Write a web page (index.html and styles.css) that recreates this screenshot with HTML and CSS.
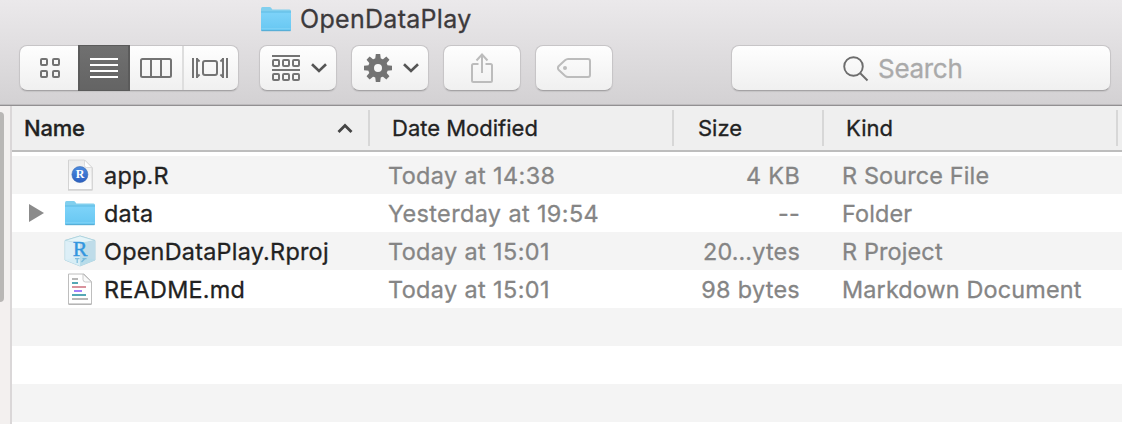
FILE: index.html
```html
<!DOCTYPE html>
<html lang="en">
<head>
<meta charset="utf-8">
<title>OpenDataPlay</title>
<link rel="stylesheet" href="styles.css">
</head>
<body>
<svg class="defs" width="0" height="0" aria-hidden="true">
  <defs>
    <linearGradient id="folder-front" x1="0" y1="0" x2="0" y2="1"><stop offset="0" stop-color="#7ed3f9"/><stop offset="1" stop-color="#67c7f2"/></linearGradient>
    <linearGradient id="paper" x1="0" y1="0" x2="0" y2="1"><stop offset="0" stop-color="#ececec"/><stop offset="1" stop-color="#fdfdfd"/></linearGradient>
    <linearGradient id="badge" x1="0" y1="0" x2="0" y2="1"><stop offset="0" stop-color="#4b8be0"/><stop offset="1" stop-color="#2c5fc0"/></linearGradient>
    <symbol id="folder" viewBox="0 0 32 26">
      <path d="M1 3Q1 1 2.5 1H9.5Q10.7 1 11.3 2L12.3 3.4H29.5Q31 3.4 31 5V23.5Q31 25 29.5 25H2.5Q1 25 1 23.5Z" fill="#81cfee"/>
      <path d="M1 6.2H31V23.5Q31 25 29.5 25H2.5Q1 25 1 23.5Z" fill="url(#folder-front)"/>
      <path d="M1 6H31" stroke="#5dbbe6"/>
      <path d="M1.3 22.6H30.7" stroke="#82d2f5" stroke-width=".8"/>
      <path d="M1.5 24.7H30.5" stroke="#55a9d0"/>
    </symbol>
  </defs>
</svg>
<header class="toolbar">
  <div class="title"><svg width="32" height="26"><use href="#folder"/></svg><h1>OpenDataPlay</h1></div>
  <div class="controls">
    <div class="button views">
      <span class="view view-icons"><svg width="22" height="22" viewBox="0 0 22 22" fill="none" stroke="#737373" stroke-width="2"><rect x="2" y="2" width="6" height="6" rx="1"/><rect x="14" y="2" width="6" height="6" rx="1"/><rect x="2" y="14" width="6" height="6" rx="1"/><rect x="14" y="14" width="6" height="6" rx="1"/></svg></span>
      <span class="view view-list"><svg width="28" height="22" viewBox="0 0 28 22" stroke="#fff" stroke-width="2"><path d="M0 2H28M0 8H28M0 14H28M0 20H28"/></svg></span>
      <span class="view view-columns"><svg width="32" height="22" viewBox="0 0 32 22" fill="none" stroke="#737373" stroke-width="2"><rect x="1" y="2" width="30" height="18" rx="1.5"/><path d="M11 2V20M21 2V20"/></svg></span>
      <span class="view view-flow"><svg width="38" height="22" viewBox="0 0 38 22" fill="none" stroke="#737373" stroke-width="2"><rect x="12" y="4" width="14" height="14" rx="2"/><path d="M2 1V21M36 1V21M6 1V21M32 1V21"/><path d="M6 2L8.6 4.5M6 20L8.6 17.5M32 2L29.4 4.5M32 20L29.4 17.5" stroke-width="1.8"/></svg></span>
    </div>
    <div class="button arrange">
      <svg width="28" height="28" viewBox="0 0 28 28" fill="none" stroke="#737373" stroke-width="2"><path d="M0 2H28M0 16H28"/><rect x="1" y="6" width="6" height="6" rx="1"/><rect x="11" y="6" width="6" height="6" rx="1"/><rect x="21" y="6" width="6" height="6" rx="1"/><rect x="1" y="20" width="6" height="6" rx="1"/><rect x="11" y="20" width="6" height="6" rx="1"/><rect x="21" y="20" width="6" height="6" rx="1"/></svg>
      <svg width="16" height="10" viewBox="0 0 16 10" fill="none" stroke="#555" stroke-width="2.6"><path d="M1 1.3L8 8L15 1.3"/></svg>
    </div>
    <div class="button arrange">
      <svg width="28" height="28" viewBox="-14 -14 28 28" fill="#737373"><circle r="7" fill="none" stroke="#737373" stroke-width="6"/><g id="teeth"><path id="tooth" d="M-2.8-9L-2.2-14H2.2L2.8-9Z"/><use href="#tooth" transform="rotate(90)"/><use href="#tooth" transform="rotate(180)"/><use href="#tooth" transform="rotate(270)"/></g><use href="#teeth" transform="rotate(45)"/></svg>
      <svg width="16" height="10" viewBox="0 0 16 10" fill="none" stroke="#555" stroke-width="2.6"><path d="M1 1.3L8 8L15 1.3"/></svg>
    </div>
    <div class="button"><svg width="22" height="30" viewBox="0 0 22 30" fill="none" stroke="#bcbcbc" stroke-width="2"><path d="M7.5 11H2.5Q1 11 1 12.500V27.500Q1 29 2.500 29H19.500Q21 29 21 27.500V12.500Q21 11 19.500 11H14.500M11 20V1.500M5.500 7.500L11 1.500L16.500 7.500"/></svg></div>
    <div class="button"><svg width="34" height="20" viewBox="0 0 34 20" fill="none" stroke="#bcbcbc" stroke-width="2"><path d="M11 1H31Q33 1 33 3V17Q33 19 31 19H11Q9.500 19 8 17.700L1.800 12Q0 10 1.800 8L8 2.300Q9.500 1 11 1Z"/><circle cx="8" cy="10" r="2" fill="#bcbcbc" stroke="none"/></svg></div>
    <div class="button search"><svg width="26" height="26" viewBox="0 0 26 26" fill="none" stroke="#6d6d6d" stroke-width="1.9"><circle cx="10.500" cy="10.500" r="9.300"/><path d="M17 17L24.500 24.500"/></svg><span>Search</span></div>
  </div>
</header>
<div class="content">
  <aside class="sidebar"><div class="scroll-thumb"></div></aside>
  <main class="list">
    <div class="head">
      <div class="col-name"><span class="name-label">Name</span><svg width="16" height="11" viewBox="0 0 16 11" fill="none" stroke="#454545" stroke-width="2.800"><path d="M1.500 9L8 2.500L14.500 9"/></svg></div>
      <div class="col-date"><span>Date Modified</span></div>
      <div class="col-size"><span>Size</span></div>
      <div class="col-kind"><span>Kind</span></div>
    </div>
    <div class="rows">
      <div class="row">
        <span class="disclosure"></span>
        <span class="icon"><svg width="32" height="34" viewBox="0 0 32 34"><path d="M4 2.500H21L28.500 10V32.500H4Z" fill="#aaa" opacity=".65"/><path d="M4.500 2H20.500L28 9.500V31.500H4.500Z" fill="url(#paper)" stroke="#cfcfcf" stroke-width=".7"/><path d="M20.500 2V7.500Q20.500 9.500 22.500 9.500H28Z" fill="#fff" stroke="#d2d2d2" stroke-width=".7"/><circle cx="15.900" cy="16.500" r="8" fill="url(#badge)" stroke="#3a68ac" stroke-width=".6"/><text x="16" y="20.300" class="badge-letter">R</text></svg></span>
        <span class="name">app.R</span><span class="date">Today at 14:38</span><span class="size">4 KB</span><span class="kind">R Source File</span>
      </div>
      <div class="row">
        <span class="disclosure"><svg width="15" height="18"><path d="M0 0L15 9L0 18Z" fill="#8b8b8b"/></svg></span>
        <span class="icon"><svg width="32" height="26"><use href="#folder"/></svg></span>
        <span class="name">data</span><span class="date">Yesterday at 19:54</span><span class="size">--</span><span class="kind">Folder</span>
      </div>
      <div class="row">
        <span class="disclosure"></span>
        <span class="icon"><svg width="32" height="32" viewBox="0 0 32 32"><path d="M16 1L31 5.500V25L16 31L1 25V5.500Z" fill="#cde6f0" stroke="#9fcbd9" stroke-width=".8"/><path d="M16 1L31 5.500L16 8.500L1 5.500Z" fill="#e5f4f8" stroke="#9fcbd9" stroke-width=".6"/><path d="M16 8.500L31 5.500V25L16 31Z" fill="#bfdce9"/><path d="M1 25L16 21L31 25L16 31Z" fill="#b3dce9" opacity=".7"/><path d="M1 5.500L16 8.500V31L1 25Z" fill="#e5f4fa" opacity=".65"/><path d="M11 23.600H15.500M18.500 23.600H22.500M13.200 24V28M20.500 24L17.500 27" fill="none" stroke="#5eabd4" stroke-width="1.300" opacity=".7"/><text x="16" y="20.800" class="cube-letter">R</text></svg></span>
        <span class="name">OpenDataPlay.Rproj</span><span class="date">Today at 15:01</span><span class="size clipped">20…ytes</span><span class="kind">R Project</span>
      </div>
      <div class="row">
        <span class="disclosure"></span>
        <span class="icon"><svg width="32" height="34" viewBox="0 0 32 34"><path d="M4.500 2H20L27.500 9.500V32H4.500Z" fill="#fff" stroke="#b7b7b7" stroke-width=".9"/><path d="M4.500 32.300H27.500" stroke="#aaa"/><path d="M19 2V7.500Q19 10 21.500 10H27.500Z" fill="#fafafa" stroke="#bebebe" stroke-width=".8"/><g stroke-width="2"><path d="M8 7H14M8 27H24" stroke="#b7b7b7"/><path d="M8 11H14M8 23H22" stroke="#54a8b5"/><path d="M8 15H22" stroke="#d9939d"/><path d="M10 19H18" stroke="#a281fb"/></g></svg></span>
        <span class="name">README.md</span><span class="date">Today at 15:01</span><span class="size">98 bytes</span><span class="kind">Markdown Document</span>
      </div>
      <div class="row"></div><div class="row"></div><div class="row"></div>
    </div>
  </main>
</div>
</body>
</html>
```
FILE: styles.css
```css
* { box-sizing: border-box; }
body { margin: 0; width: 1122px; height: 424px; overflow: hidden; background: #fff; font-family: Inter, "Liberation Sans", sans-serif; color: #222; -webkit-text-stroke: .3px; }
svg { display: block; flex: none; -webkit-text-stroke: 0; }
.defs { position: absolute; }

.toolbar { height: 106px; background: linear-gradient(#ebe9eb, #d3d1d3); border-bottom: 1px solid #929092; box-shadow: inset 0 -1px #bdbbbd; }
.title { display: flex; align-items: center; height: 38px; padding-left: 260px; gap: 8px; }
.title h1 { margin: 0; font-size: 25px; font-weight: 400; color: #3c3a3c; letter-spacing: .3px; white-space: nowrap; }
.controls { display: flex; height: 53px; padding: 7px 11px 0 19px; gap: 14px; }
.button { display: flex; align-items: center; justify-content: center; width: 78px; height: 46px; border: 1px solid #c7c5c7; border-bottom-color: #a5a3a5; border-radius: 8px; background: linear-gradient(#fefefe, #f0f0f0); box-shadow: 0 1px 1px rgba(0, 0, 0, .08); }
.views { width: 220px; margin-right: 6px; justify-content: flex-start; }
.view { display: flex; align-items: center; justify-content: center; height: 46px; margin: -1px 0; }
.view-icons { width: 58px; padding-left: 2px; }
.view-list { width: 52px; background: linear-gradient(#707070, #646464); border: solid #5b5b5b; border-width: 1px 2px; }
.view-columns { width: 52px; }
.view-flow { width: 56px; border-left: 2px solid #dedede; margin: 0; height: 44px; padding-right: 2px; }
.arrange { gap: 11px; padding-left: 2px; }
.search { width: 380px; margin-left: 104px; gap: 9px; justify-content: flex-start; padding-left: 111px; color: #aaa; font-size: 26px; letter-spacing: -.3px; }
.search svg { margin-top: 2px; }

.content { display: flex; height: 318px; }
.sidebar { width: 12px; background: #f3f0ef; border-right: 2px solid #dad7d8; padding-top: 6px; }
.scroll-thumb { width: 4px; height: 190px; border-radius: 0 5px 5px 0; background: #b9b7b5; }
.list { flex: 1; min-width: 0; }
.head { display: flex; height: 46px; padding-top: 4px; background: #efefef; border-bottom: 2px solid #bdbdbd; font-size: 22px; color: #222; }
.head > div { display: flex; align-items: center; height: 36px; border-right: 2px solid #d7d7d7; white-space: nowrap; }
.head .col-name { width: 358px; padding: 0 15px 0 12px; justify-content: space-between; }
.name-label { font-weight: 500; letter-spacing: -.2px; }
.col-date { width: 304px; padding-left: 22px; }
.col-size { width: 150px; padding-left: 24px; }
.col-kind { width: 294px; padding-left: 22px; }
.rows { padding-top: 4px; }
.row { display: flex; align-items: center; height: 38px; font-size: 23.4px; white-space: nowrap; color: #858585; }
.row:nth-child(odd) { background: #f4f4f4; }
.disclosure { width: 52px; padding-left: 17px; }
.icon { display: flex; justify-content: center; width: 32px; }
.name { width: 284px; padding-left: 8px; margin-right: 8px; color: #222; letter-spacing: .25px; }
.date { width: 284px; letter-spacing: .4px; }
.size { width: 128px; text-align: right; letter-spacing: .3px; }
.clipped { letter-spacing: .2px; }
.kind { padding-left: 42px; letter-spacing: .15px; }
.badge-letter { font: bold 12px "Liberation Serif", serif; fill: #fff; text-anchor: middle; }
.cube-letter { font: 22px "Liberation Serif", serif; fill: #3296df; stroke: #3296df; stroke-width: .4px; text-anchor: middle; }
```
